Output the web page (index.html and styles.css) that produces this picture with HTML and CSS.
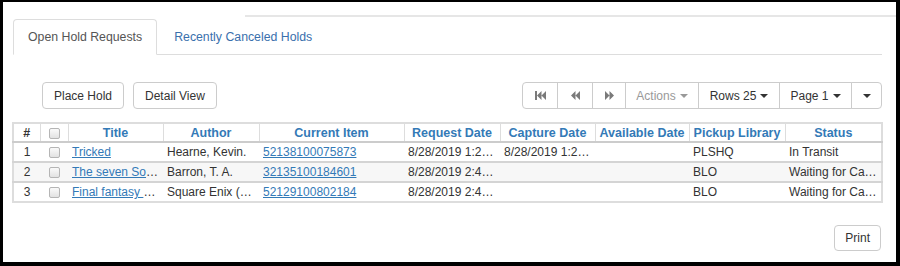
FILE: index.html
```html
<!DOCTYPE html>
<html lang="en">
<head>
    <meta charset="UTF-8">
    <title>Holds</title>
    <link rel="stylesheet" href="styles.css">
</head>
<body>
    <div class="page">
        <div class="rule"></div>
        <ul class="tabs">
            <li class="tab active">Open Hold Requests</li>
            <li class="tab">Recently Canceled Holds</li>
        </ul>

        <div class="toolbar">
            <div class="left-btns">
                <button class="btn">Place Hold</button>
                <button class="btn">Detail View</button>
            </div>
            <div class="btn-group">
                <button class="btn icon-btn w-first">
                    <svg width="11" height="9" viewBox="0 0 11 9"><rect x="0" y="0" width="2" height="9" fill="#7a7a7a"/><path d="M2 4.5L6.5 0v9z M6.5 4.5L11 0v9z" fill="#7a7a7a"/></svg>
                </button>
                <button class="btn icon-btn w-prev">
                    <svg width="9" height="9" viewBox="0 0 9 9"><path d="M0 4.5L4.5 0v9z M4.5 4.5L9 0v9z" fill="#7a7a7a"/></svg>
                </button>
                <button class="btn icon-btn w-next">
                    <svg width="9" height="9" viewBox="0 0 9 9"><path d="M9 4.5L4.5 0v9z M4.5 4.5L0 0v9z" fill="#7a7a7a"/></svg>
                </button>
                <button class="btn disabled w-actions">Actions <span class="caret"></span></button>
                <button class="btn w-rows">Rows 25 <span class="caret dark"></span></button>
                <button class="btn w-page">Page 1 <span class="caret dark"></span></button>
                <button class="btn w-more"><span class="caret dark"></span></button>
            </div>
        </div>

        <table class="grid">
            <colgroup>
                <col style="width:27px">
                <col style="width:28px">
                <col style="width:95px">
                <col style="width:96px">
                <col style="width:145px">
                <col style="width:96px">
                <col style="width:95px">
                <col style="width:94px">
                <col style="width:96px">
                <col style="width:97px">
            </colgroup>
            <thead>
                <tr>
                    <th class="num">#</th>
                    <th class="chk"><span class="box"></span></th>
                    <th>Title</th>
                    <th>Author</th>
                    <th>Current Item</th>
                    <th>Request Date</th>
                    <th>Capture Date</th>
                    <th>Available Date</th>
                    <th>Pickup Library</th>
                    <th>Status</th>
                </tr>
            </thead>
            <tbody>
                <tr>
                    <td class="num">1</td>
                    <td class="chk"><span class="box"></span></td>
                    <td><a href="#">Tricked</a></td>
                    <td>Hearne, Kevin.</td>
                    <td><a href="#">52138100075873</a></td>
                    <td>8/28/2019 1:29 PM</td>
                    <td>8/28/2019 1:29 PM</td>
                    <td></td>
                    <td>PLSHQ</td>
                    <td>In Transit</td>
                </tr>
                <tr class="striped">
                    <td class="num">2</td>
                    <td class="chk"><span class="box"></span></td>
                    <td><a href="#">The seven Songs of Merlin</a></td>
                    <td>Barron, T. A.</td>
                    <td><a href="#">32135100184601</a></td>
                    <td>8/28/2019 2:45 PM</td>
                    <td></td>
                    <td></td>
                    <td>BLO</td>
                    <td>Waiting for Capture</td>
                </tr>
                <tr>
                    <td class="num">3</td>
                    <td class="chk"><span class="box"></span></td>
                    <td><a href="#">Final fantasy XV : official works</a></td>
                    <td>Square Enix (Firm)</td>
                    <td><a href="#">52129100802184</a></td>
                    <td>8/28/2019 2:46 PM</td>
                    <td></td>
                    <td></td>
                    <td>BLO</td>
                    <td>Waiting for Capture</td>
                </tr>
            </tbody>
        </table>

        <div class="footer">
            <button class="btn print">Print</button>
        </div>
    </div>
</body>
</html>
```

FILE: styles.css
```css
* {
    margin: 0;
    padding: 0;
    box-sizing: border-box;
}

html, body {
    height: 266px;
}

body {
    background: #000;
    padding: 2px 4px 4px 3px;
    font-family: 'Liberation Sans', Arial, sans-serif;
    font-size: 12px;
    color: #333;
}

.page {
    background: #fff;
    height: 100%;
    overflow: hidden;
}

.rule {
    margin: 13px 0 0 242px;
    height: 2px;
    background: #e6e6e6;
}

/* tabs */
.tabs {
    list-style: none;
    display: flex;
    margin: 2px 14px 0 10px;
    border-bottom: 1px solid #ddd;
}

.tab {
    padding: 10px 14px;
    line-height: 14px;
    font-size: 12.3px;
    color: #3a70ad;
    border: 1px solid transparent;
    border-radius: 4px 4px 0 0;
    margin-bottom: -1px;
    margin-right: 2px;
}

.tab.active {
    color: #555;
    background: #fff;
    border-color: #ddd;
    border-bottom-color: #fff;
}

/* toolbar */
.toolbar {
    display: flex;
    justify-content: space-between;
    margin: 27px 14px 0 39px;
}

.left-btns {
    display: flex;
    gap: 9px;
}

.btn {
    height: 27px;
    padding: 0 11px;
    font-family: inherit;
    font-size: 12px;
    color: #333;
    background: #fff;
    border: 1px solid #ccc;
    border-radius: 4px;
    display: flex;
    align-items: center;
    justify-content: center;
    gap: 4px;
}

.btn-group {
    display: flex;
}

.btn-group .btn {
    border-radius: 0;
    margin-left: -1px;
    padding: 0;
}

.btn-group .btn:first-child {
    border-radius: 4px 0 0 4px;
    margin-left: 0;
}

.btn-group .btn:last-child {
    border-radius: 0 4px 4px 0;
}

.w-first { width: 36px; }
.w-prev { width: 36px; }
.w-next { width: 34px; }
.w-actions { width: 74px; }
.w-rows { width: 82px; }
.w-page { width: 73px; }
.w-more { width: 31px; }

.btn.disabled {
    color: #999;
}

.caret {
    display: inline-block;
    width: 0;
    height: 0;
    border-top: 4px solid #999;
    border-left: 4px solid transparent;
    border-right: 4px solid transparent;
}

.caret.dark {
    border-top-color: #333;
}

/* table */
.grid {
    table-layout: fixed;
    border-collapse: collapse;
    width: 869px;
    margin: 13px 0 0 9px;
    border: 2px solid #ddd;
}

.grid th {
    height: 19px;
    padding: 0 3px;
    font-size: 12.5px;
    font-weight: bold;
    color: #337ab7;
    text-align: center;
    border-right: 1px solid #ddd;
    border-bottom: 2px solid #ccc;
    white-space: nowrap;
    overflow: hidden;
}

.grid th.num {
    color: #333;
}

.grid td {
    height: 20px;
    padding: 0 1px 0 4px;
    border-top: 2px solid #d4d4d4;
    white-space: nowrap;
    overflow: hidden;
    text-overflow: ellipsis;
}

.grid tbody tr:first-child td {
    border-top: none;
}

.grid td.num,
.grid td.chk,
.grid th.chk {
    text-align: center;
    padding: 0;
}

.grid .striped td {
    background: #f7f7f7;
}

.grid a {
    color: #337ab7;
    text-decoration: underline;
}

.box {
    display: inline-block;
    width: 11px;
    height: 11px;
    border: 1px solid #b5b5b5;
    border-radius: 2px;
    background: linear-gradient(#fafafa, #e2e2e2);
    vertical-align: middle;
}

.footer {
    display: flex;
    justify-content: flex-end;
    margin: 22px 15px 0 0;
}

.print {
    height: 26px;
    padding: 0 10px;
}
```
